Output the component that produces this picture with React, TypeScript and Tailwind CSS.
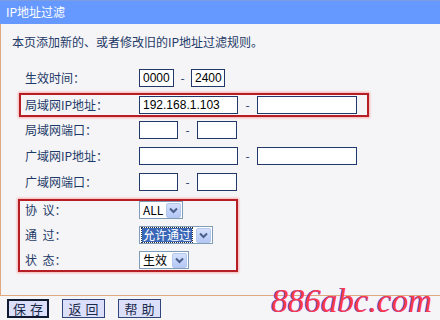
import React from 'react';

const font = { fontFamily: '"Noto Sans CJK SC", "Liberation Sans", sans-serif' };

const Box: React.FC<{ w: string; value?: string }> = ({ w, value }) => (
  <div
    className={`${w} h-[18px] bg-white border border-[#22386a] flex items-center pl-[3px] text-[12px] text-black leading-none`}
    style={{ fontFamily: '"Liberation Sans", sans-serif' }}
  >
    {value}
  </div>
);

const Dash: React.FC<{ w: string }> = ({ w }) => (
  <span className={`${w} text-center text-[12px] text-[#22386a] leading-none`}>-</span>
);

const Chevron = () => (
  <div className="w-[15px] h-[15px] mr-[1px] shrink-0 bg-gradient-to-b from-[#d4e0fc] to-[#b4c8f6] border border-[#b6c7ee] rounded-[2px] flex items-center justify-center">
    <svg width="9" height="7" viewBox="0 0 9 7">
      <path d="M1 1.5 L4.5 5 L8 1.5" fill="none" stroke="#4a5f8c" strokeWidth="2" />
    </svg>
  </div>
);

const Select: React.FC<{ w: string; value: string; active?: boolean }> = ({ w, value, active }) => (
  <div className={`${w} h-[18px] bg-white border border-[#7f9db9] flex items-center justify-between pl-[2px]`}>
    {active ? (
      <span className="shrink-0 whitespace-nowrap bg-[#3a66b8] text-white text-[12px] leading-[14px] px-[1px] outline outline-1 outline-dotted outline-[#333]">
        {value}
      </span>
    ) : (
      <span className="shrink-0 whitespace-nowrap text-black text-[12px] leading-none pl-[1px]">{value}</span>
    )}
    <Chevron />
  </div>
);

const Label: React.FC<{ children: React.ReactNode }> = ({ children }) => (
  <span className="w-[114px] shrink-0 whitespace-pre text-[12px] text-[#1e3a68] leading-none">{children}</span>
);

const Button: React.FC<{ w: string; label: string; primary?: boolean }> = ({ w, label, primary }) => (
  <button
    className={`${w} h-[19px] bg-[#dcdffa] text-[13px] text-[#1a2a4a] leading-none tracking-[4px] pl-[4px] ${
      primary ? 'border-2 border-[#111a33]' : 'border border-[#30467a]'
    }`}
  >
    {label}
  </button>
);

export default function App() {
  return (
    <div className="relative w-[440px] h-[320px] overflow-hidden bg-[#f5f5f7]" style={font}>
      <div className="h-[24px] bg-[#6699ff] border-t border-[#7d9be0] text-white text-[12px] leading-[22px] pl-[6px]">
        IP地址过滤
      </div>

      <div className="h-[272px] border-l border-b border-[#e0a87c] flex flex-col">
        <p className="pt-[11px] pl-[11px] text-[12px] leading-[14px] text-[#1e3a68]">
          本页添加新的、或者修改旧的IP地址过滤规则。
        </p>

        <div className="mt-[19px] h-[20px] flex items-center pl-[24px]">
          <Label>生效时间：</Label>
          <Box w="w-[35px]" value="0000" />
          <Dash w="w-[17px]" />
          <Box w="w-[34px]" value="2400" />
        </div>

        <div className="mt-[5px] ml-[18px] w-[350px] h-[24px] border-2 border-[#b41e24] shadow-[0_0_2px_1px_rgba(255,90,90,0.45)] flex items-center pl-[4px]">
          <Label>局域网IP地址：</Label>
          <Box w="w-[99px]" value="192.168.1.103" />
          <Dash w="w-[19px]" />
          <Box w="w-[100px]" />
        </div>

        <div className="mt-[3px] h-[20px] flex items-center pl-[24px]">
          <Label>局域网端口：</Label>
          <Box w="w-[39px]" />
          <Dash w="w-[19px]" />
          <Box w="w-[40px]" />
        </div>

        <div className="mt-[6px] h-[20px] flex items-center pl-[24px]">
          <Label>广域网IP地址：</Label>
          <Box w="w-[99px]" />
          <Dash w="w-[19px]" />
          <Box w="w-[100px]" />
        </div>

        <div className="mt-[6px] h-[20px] flex items-center pl-[24px]">
          <Label>广域网端口：</Label>
          <Box w="w-[39px]" />
          <Dash w="w-[19px]" />
          <Box w="w-[40px]" />
        </div>

        <div className="mt-[7px] ml-[17px] w-[220px] h-[73px] border-2 border-[#b41e24] shadow-[0_0_2px_1px_rgba(255,90,90,0.45)] flex flex-col gap-[7px] pl-[5px]">
          <div className="h-[18px] flex items-center">
            <Label>协  议：</Label>
            <Select w="w-[44px]" value="ALL" />
          </div>
          <div className="h-[18px] flex items-center">
            <Label>通  过：</Label>
            <Select w="w-[74px]" value="允许通过" active />
          </div>
          <div className="h-[18px] flex items-center">
            <Label>状  态：</Label>
            <Select w="w-[50px]" value="生效" />
          </div>
        </div>
      </div>

      <div className="flex items-center gap-[13px] pt-[3px] pl-[7px]">
        <Button w="w-[42px]" label="保存" primary />
        <Button w="w-[43px]" label="返回" />
        <Button w="w-[43px]" label="帮助" />
      </div>

      <div
        className="absolute right-[8px] bottom-[2px] text-[33px] italic text-[#ff3a4a] leading-none"
        style={{ fontFamily: '"Liberation Serif", serif', textShadow: '-1px 0 0 #5a5cff' }}
      >
        886abc.com
      </div>
    </div>
  );
}
